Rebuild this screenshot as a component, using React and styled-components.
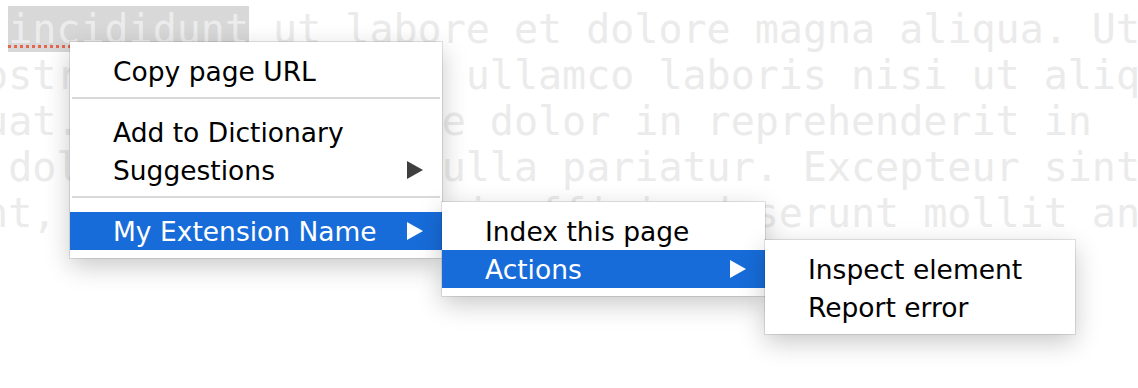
import React from "react";
import styled, { createGlobalStyle } from "styled-components";

const GlobalStyle = createGlobalStyle`
  html, body {
    margin: 0;
    padding: 0;
    background: #fff;
  }
  body {
    overflow: hidden;
  }
`;

const Page = styled.div`
  position: relative;
  width: 1138px;
  height: 388px;
  overflow: hidden;
  background: #fff;
`;

const Editor = styled.pre`
  margin: 0 0 0 -40px;
  padding-top: 6px;
  font-family: "DejaVu Sans Mono", "Liberation Mono", monospace;
  font-size: 40px;
  line-height: 46px;
  color: #ebebeb;
  white-space: pre;
`;

const Misspelled = styled.span`
  background: #d8d8d8;
  color: #ececec;
  text-decoration: underline dotted #e4664f;
  text-decoration-thickness: 3px;
  text-underline-offset: 2px;
`;

const Menu = styled.div`
  position: absolute;
  left: ${(p) => p.$left};
  top: ${(p) => p.$top};
  width: ${(p) => p.$width}px;
  box-sizing: border-box;
  padding: 10px 0 8px;
  background: #fff;
  box-shadow: 0 0 0 1px rgba(0, 0, 0, 0.1), 0 8px 24px rgba(0, 0, 0, 0.22);
  font-family: "DejaVu Sans", Verdana, sans-serif;
  font-size: 26.5px;
  color: #000;
  z-index: 1;
`;

const Item = styled.div`
  position: relative;
  display: flex;
  align-items: center;
  justify-content: space-between;
  height: 38px;
  padding: 0 19px 0 43px;
  background: ${(p) => (p.$active ? "#176cd9" : "transparent")};
  color: ${(p) => (p.$active ? "#fff" : "#000")};
  white-space: nowrap;
`;

const Separator = styled.div`
  height: 2px;
  margin: 7px 2px 14px;
  background: #d9d9d9;
`;

const ArrowIcon = styled.svg`
  flex: none;
  width: 16px;
  height: 18px;
  fill: ${(p) => (p.$active ? "#fff" : "#3f3f3f")};
`;

const Arrow = ({ active }) => (
  <ArrowIcon $active={active} viewBox="0 0 16 18">
    <polygon points="0,0 16,9 0,18" />
  </ArrowIcon>
);

const App = () => {
  return (
    <Page>
      <GlobalStyle />
      <Editor>
        {"r "}
        <Misspelled>incididunt</Misspelled>
        {" ut labore et dolore magna aliqua. Ut\n"}
        {"nostrud exercitation ullamco laboris nisi ut aliquip\n"}
        {"quat. Duis aute irure dolor in reprehenderit in\n"}
        {"m dolore eu fugiat nulla pariatur. Excepteur sint\n"}
        {"ent, sunt in culpa qui officia deserunt mollit anim"}
      </Editor>

      <Menu $left="70px" $top="42px" $width={372}>
        <Item>Copy page URL</Item>
        <Separator />
        <Item>Add to Dictionary</Item>
        <Item>
          Suggestions
          <Arrow />
        </Item>
        <Separator />
        <Item $active>
          My Extension Name
          <Arrow active />
          <Menu $left="100%" $top="-10px" $width={323}>
            <Item>Index this page</Item>
            <Item $active>
              Actions
              <Arrow active />
              <Menu $left="100%" $top="-10px" $width={310}>
                <Item>Inspect element</Item>
                <Item>Report error</Item>
              </Menu>
            </Item>
          </Menu>
        </Item>
      </Menu>
    </Page>
  );
};

export default App;
